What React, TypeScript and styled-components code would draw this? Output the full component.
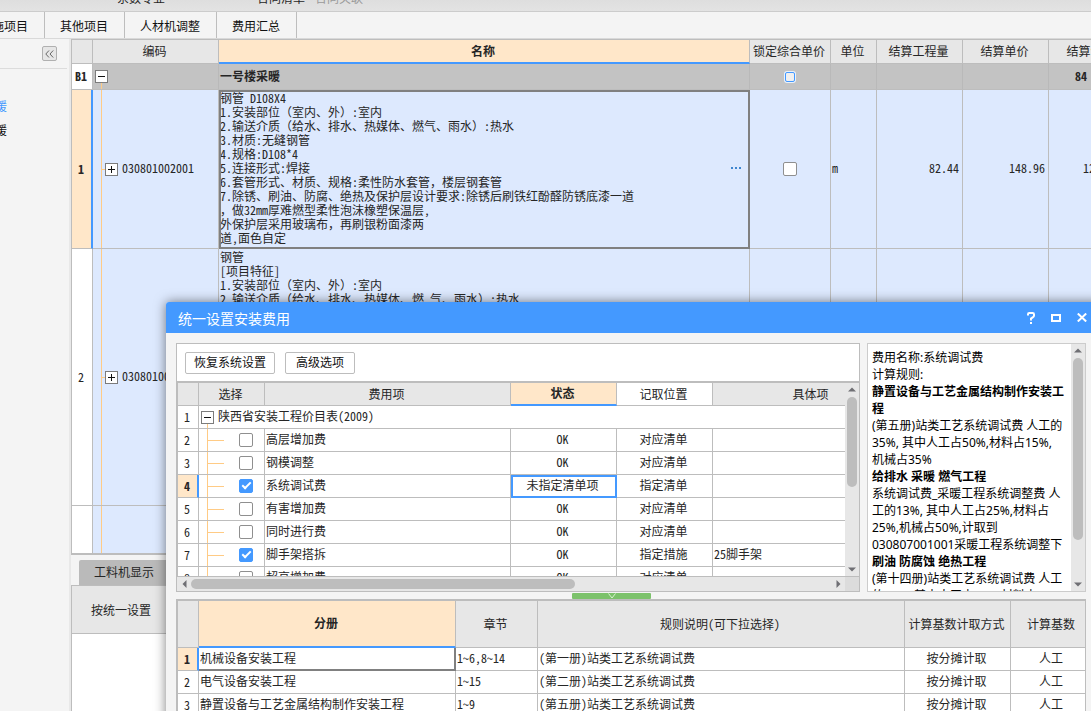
import React from "react";
import styled, { createGlobalStyle, css } from "styled-components";

const c = {
  line: "#bdbdbd",
  head: "#e7e7e7",
  page: "#f4f4f4",
  blue: "#4499ff",
  peach: "#ffe7c9",
  tree: "#ffcb85",
  pick: "#dde9fe",
  ink: "#262626",
};
const uiFont = `"Noto Sans", "Noto Sans CJK SC", sans-serif`;
const gridFont = `"Noto Sans Mono CJK SC", "Noto Sans CJK SC", monospace`;

const Global = createGlobalStyle`
  *, *::before, *::after { box-sizing: border-box; }
  html, body, #root { height: 100%; }
  body { margin: 0; overflow: hidden; background: ${c.page}; color: ${c.ink}; font: 12px/16px ${uiFont}; }
  button { font: inherit; color: inherit; padding: 0; margin: 0; border: 0; background: none; }
  a { color: inherit; text-decoration: none; }
`;

const Page = styled.div`
  position: relative;
  display: flex;
  flex-direction: column;
  height: 100%;
  overflow: hidden;
`;

const Ribbon = styled.div`
  flex: none;
  display: flex;
  align-items: flex-end;
  height: 12px;
  padding: 0 0 4px 117px;
  background: linear-gradient(#dedede, #e3e3e3);
  border-bottom: 1px solid #cccccc;
`;
const RibbonItem = styled.button<{ $gap?: number; $off?: boolean }>`
  margin-right: ${(p) => p.$gap ?? 0}px;
  white-space: nowrap;
  color: ${(p) => (p.$off ? "#9a9a9a" : c.ink)};
`;

const Tabs = styled.nav`
  flex: none;
  display: flex;
  height: 27px;
  margin-left: -35px;
  border-bottom: 1px solid #d9d9d9;
`;
const Tab = styled.a`
  padding: 0 16px 0 15px;
  line-height: 30px;
  height: 26px;
  white-space: nowrap;
  color: #111;
  border-right: 1px solid ${c.line};
`;

const Body = styled.div`
  flex: 1;
  display: flex;
  min-height: 0;
`;
const Side = styled.aside`
  flex: 0 0 71px;
  overflow: hidden;
  border-right: 2px solid #e8e8e8;
`;
const SideHead = styled.div`
  display: flex;
  justify-content: flex-end;
  height: 30px;
  margin-right: 2px;
  padding: 7px 10px 0 0;
  border-bottom: 1px solid #dcdcdc;
`;
const Collapse = styled.button`
  display: grid;
  place-items: center;
  width: 15px;
  height: 15px;
  border: 1px solid #b0b0b0;
  border-radius: 2px;
  background: #e6e6e6;
`;
const SideList = styled.div`
  display: flex;
  flex-direction: column;
  gap: 8px;
  margin: 30px 0 0 -53px;
`;
const SideLink = styled.a<{ $on?: boolean }>`
  white-space: nowrap;
  color: ${(p) => (p.$on ? c.blue : "#111")};
`;

const Main = styled.main`
  flex: 1;
  min-width: 0;
  display: flex;
  flex-direction: column;
`;
const SheetBox = styled.div`
  flex: 0 0 514px;
  overflow: hidden;
  border: solid ${c.line};
  border-width: 1px 0 0 1px;
`;
const Table = styled.table<{ $extra?: number }>`
  width: calc(100% + ${(p) => p.$extra ?? 0}px);
  table-layout: fixed;
  border-collapse: separate;
  border-spacing: 0;
  font: 12px/14px ${gridFont};
`;
const Col = styled.col<{ $w?: number }>`
  width: ${(p) => (p.$w ? p.$w + "px" : "auto")};
`;
const Th = styled.th<{ $active?: boolean; $white?: boolean; $h?: number }>`
  height: ${(p) => p.$h ?? 24}px;
  padding: 0 2px 1px 0;
  overflow: hidden;
  white-space: nowrap;
  font-weight: ${(p) => (p.$active ? 700 : 400)};
  background: ${(p) => (p.$active ? c.peach : p.$white ? "#fff" : c.head)};
  border-right: 1px solid ${c.line};
  border-bottom: ${(p) => (p.$active ? `2px solid ${c.blue}` : `1px solid ${c.line}`)};
`;
const Td = styled.td<{ $align?: string; $top?: boolean; $pad?: number }>`
  padding: ${(p) => (p.$top ? 1 : 0)}px 3px 2px ${(p) => p.$pad ?? 1}px;
  overflow: hidden;
  white-space: nowrap;
  text-align: ${(p) => p.$align ?? "left"};
  vertical-align: ${(p) => (p.$top ? "top" : "middle")};
  border-right: 1px solid ${c.line};
  border-bottom: 1px solid ${c.line};
`;
const treeLine = css<{ $from?: number }>`
  background: linear-gradient(${c.tree}, ${c.tree}) 8px ${(p) => p.$from ?? 0}px / 1px 100% no-repeat;
`;
const TreeTd = styled(Td)<{ $from?: number }>`
  padding: 0;
  ${treeLine}
`;
const NumTd = styled.td<{ $on?: boolean; $bold?: boolean }>`
  padding: 0 ${(p) => (p.$on ? 1 : 2)}px 1px 0;
  text-align: center;
  vertical-align: middle;
  background: ${(p) => (p.$on ? c.peach : "#fff")};
  font-weight: ${(p) => (p.$on || p.$bold ? 700 : 400)};
  border-right: ${(p) => (p.$on ? `2px solid ${c.blue}` : `1px solid ${c.line}`)};
  border-bottom: 1px solid ${c.line};
`;
const EditTd = styled(Td)`
  outline: 2px solid #808080;
  outline-offset: -2px;
`;
const FocusTd = styled(Td)`
  outline: 2px solid ${c.blue};
  outline-offset: -2px;
`;
const BookTd = styled(Td)<{ $on?: boolean }>`
  padding-bottom: ${(p) => (p.$on ? 1 : 2)}px;
  border-right: ${(p) => (p.$on ? "2px solid #808080" : `1px solid ${c.line}`)};
  border-bottom: ${(p) => (p.$on ? "2px solid #808080" : `1px solid ${c.line}`)};
`;
const CheckTd = styled(Td)`
  padding: 0 0 2px;
  text-align: center;
`;
const SheetRow = styled.tr<{ $h: number; $group?: boolean }>`
  height: ${(p) => p.$h}px;
  background-color: ${(p) => (p.$group ? "#c3c3c3" : c.pick)};
  font-weight: ${(p) => (p.$group ? 700 : 400)};
  ${(p) =>
    p.$group &&
    css`
      ${Td}, ${TreeTd} {
        border-right-color: #b9b9b9;
      }
    `}
`;
const Row = styled.tr`
  height: 23px;
`;
const Branch = styled.div<{ $in: number; $gap?: number }>`
  display: flex;
  align-items: center;
  gap: ${(p) => p.$gap ?? 0}px;
  padding-left: ${(p) => p.$in}px;
`;
const Stub = styled.span<{ $w: number }>`
  flex: none;
  width: ${(p) => p.$w}px;
  height: 1px;
  background: ${c.tree};
`;
const Code = styled.span`
  margin-left: 4px;
  padding-bottom: 2px;
`;
const ExpandBtn = styled.button`
  flex: none;
  display: block;
  width: 13px;
  height: 13px;
  background: #fff;
  border: 1px solid #7c7c7c;
  svg {
    display: block;
  }
`;
const Lines = styled.div`
  display: flex;
  align-items: center;
  justify-content: space-between;
  white-space: pre-line;
`;
const More = styled.button`
  display: flex;
  gap: 2px;
  margin-right: 5px;
`;
const Dot = styled.i`
  width: 2px;
  height: 2px;
  background: #3f86cf;
`;

const Check = styled.input.attrs({ type: "checkbox" })<{ $glow?: boolean }>`
  appearance: none;
  flex: none;
  display: inline-grid;
  place-items: center;
  width: 14px;
  height: 14px;
  margin: 0;
  vertical-align: middle;
  background: #fff;
  border: 1px solid #8f8f8f;
  border-radius: 2px;
  &:checked {
    background: ${c.blue};
    border-color: ${c.blue};
  }
  &:checked::after {
    content: "";
    width: 5px;
    height: 9px;
    margin-bottom: 3px;
    border: solid #fff;
    border-width: 0 2px 2px 0;
    transform: rotate(45deg);
  }
  ${(p) =>
    p.$glow &&
    css`
      width: 10px;
      height: 10px;
      background: #f0f0f0;
      border: 1px solid ${c.blue};
      box-shadow: 0 0 0 1px #e8f1fc;
    `}
`;

const Lower = styled.section`
  flex: 1;
  display: flex;
  flex-direction: column;
  min-height: 0;
  border-top: 2px solid ${c.line};
`;
const LowerTabs = styled.div`
  display: flex;
  padding: 5px 0 0 8px;
  border-bottom: 1px solid ${c.line};
`;
const LowerTab = styled.button`
  height: 25px;
  padding: 0 15px;
  background: #bababa;
  border-radius: 2px 2px 0 0;
`;
const LowerHead = styled.div`
  height: 48px;
  padding-left: 19px;
  background: ${c.head};
  border: solid ${c.line};
  border-width: 0 0 1px 1px;
  font: 12px/48px ${gridFont};
`;
const LowerBlank = styled.div`
  flex: 1;
  background: #fff;
  border-left: 1px solid ${c.line};
`;

const Dialog = styled.section`
  position: absolute;
  top: 302px;
  left: 166px;
  right: 0;
  bottom: 0;
  display: flex;
  flex-direction: column;
  overflow: hidden;
  background: ${c.page};
  border-radius: 3px 0 0 0;
`;
const Shade = styled.div`
  position: absolute;
  top: 302px;
  left: 166px;
  right: -20px;
  bottom: -20px;
  border-radius: 3px;
  box-shadow: 0 0 12px rgba(0, 0, 0, 0.5);
`;
const TitleBar = styled.header`
  flex: none;
  display: flex;
  align-items: center;
  gap: 16px;
  height: 31px;
  padding: 0 4px 0 12px;
  background: ${c.blue};
  color: #fff;
`;
const Title = styled.h2`
  flex: 1;
  margin: 0;
  font: 400 14px/20px ${uiFont};
  padding-top: 2px;
`;
const WinBtn = styled.button`
  display: block;
  svg {
    display: block;
  }
`;
const DialogBody = styled.div`
  flex: 1;
  display: flex;
  flex-direction: column;
  min-height: 0;
  padding: 10px 5px 0 10px;
`;
const Upper = styled.div`
  flex: none;
  display: flex;
  gap: 7px;
  height: 249px;
`;
const FeePanel = styled.div`
  flex: 1;
  min-width: 0;
  display: flex;
  flex-direction: column;
  background: #fff;
  border: 1px solid ${c.line};
`;
const Actions = styled.div`
  flex: none;
  display: flex;
  gap: 10px;
  height: 37px;
  padding: 8px 8px 0;
`;
const Action = styled.button`
  height: 22px;
  min-width: 70px;
  padding: 0 8px;
  color: #111;
  border: 1px solid ${c.line};
  border-radius: 2px;
  background: #fff;
`;
const FeeGrid = styled.div`
  flex: 1;
  display: flex;
  min-height: 0;
  border: solid ${c.line};
  border-width: 2px 0 1px 1px;
`;
const Clip = styled.div`
  flex: 1;
  min-width: 0;
  overflow: hidden;
`;
const VBar = styled.div<{ $thumb: number }>`
  flex: none;
  display: flex;
  flex-direction: column;
  align-items: center;
  justify-content: space-between;
  width: 14px;
  padding: 4px 0;
  background: ${c.head};
  > i {
    width: 10px;
    height: ${(p) => p.$thumb}px;
    margin: 5px 0 auto;
    border-radius: 5px;
    background: ${c.line};
  }
`;
const HBar = styled.div`
  flex: none;
  display: flex;
  align-items: center;
  height: 14px;
  background: ${c.head};
  padding-left: 5px;
  > i {
    width: 384px;
    height: 10px;
    margin: 0 auto 0 4px;
    border-radius: 5px;
    background: ${c.line};
  }
`;
const Corner = styled.span`
  width: 14px;
  height: 14px;
  margin-left: 4px;
  background: #dcdcdc;
`;
const ArrowBtn = styled.button`
  display: block;
  svg {
    display: block;
  }
`;

const NotePanel = styled.div`
  flex: 0 0 219px;
  display: flex;
  background: #fff;
  border: 1px solid #cccccc;
`;
const Note = styled.div`
  flex: 1;
  min-width: 0;
  padding: 5px 0 0 4px;
  overflow: hidden;
  color: #000;
  font: 12px/17px ${uiFont};
  white-space: nowrap;
`;
const NoteLine = styled.div<{ $b?: boolean }>`
  font-weight: ${(p) => (p.$b ? 700 : 400)};
`;

const Fold = styled.button`
  flex: none;
  display: grid;
  place-items: center;
  width: 79px;
  height: 6px;
  margin: 1px 0 0 396px;
  background: #7cc26b;
  border-radius: 1px;
`;
const BookPanel = styled.div`
  flex: 1;
  min-height: 0;
  overflow: hidden;
  background: #fff;
  border: solid ${c.line};
  border-width: 2px 1px 0 2px;
`;

function Expander({ open, label }: { open?: boolean; label: string }) {
  return (
    <ExpandBtn type="button" aria-label={label} aria-expanded={!!open}>
      <svg width="11" height="11" viewBox="0 0 11 11" stroke="#111" strokeWidth="1">
        <path d={open ? "M2 5.5h7" : "M2 5.5h7M5.5 2v7"} />
      </svg>
    </ExpandBtn>
  );
}

const arrows = {
  up: "M0 4.5 L4 0.5 L8 4.5Z",
  down: "M0 0.5 L4 4.5 L8 0.5Z",
  left: "M4.5 0 L0.5 4 L4.5 8Z",
  right: "M0.5 0 L4.5 4 L0.5 8Z",
};
function Arrow({ dir }: { dir: keyof typeof arrows }) {
  const tall = dir === "left" || dir === "right";
  return (
    <ArrowBtn type="button" aria-label={dir}>
      <svg width={tall ? 5 : 8} height={tall ? 8 : 5} fill="#6f6f74">
        <path d={arrows[dir]} />
      </svg>
    </ArrowBtn>
  );
}

const pipeText = [
  "钢管 D108X4",
  "1.安装部位（室内、外）:室内",
  "2.输送介质（给水、排水、热媒体、燃气、雨水）:热水",
  "3.材质:无缝钢管",
  "4.规格:D108*4",
  "5.连接形式:焊接",
  "6.套管形式、材质、规格:柔性防水套管，楼层钢套管",
  "7.除锈、刷油、防腐、绝热及保护层设计要求:除锈后刷铁红酚醛防锈底漆一道",
  "，做32mm厚难燃型柔性泡沫橡塑保温层,",
  "外保护层采用玻璃布，再刷银粉面漆两",
  "道,面色自定",
].join("\n");
const pipeText2 = [
  "钢管",
  "[项目特征]",
  "1.安装部位（室内、外）:室内",
  "2.输送介质（给水、排水、热媒体、燃 气、雨水）:热水",
].join("\n");

const fees = [
  { n: 2, name: "高层增加费", state: "OK", place: "对应清单", item: "" },
  { n: 3, name: "钢模调整", state: "OK", place: "对应清单", item: "" },
  { n: 4, name: "系统调试费", state: "未指定清单项", place: "指定清单", item: "", on: true },
  { n: 5, name: "有害增加费", state: "OK", place: "对应清单", item: "" },
  { n: 6, name: "同时进行费", state: "OK", place: "对应清单", item: "" },
  { n: 7, name: "脚手架搭拆", state: "OK", place: "指定措施", item: "25脚手架", on: true },
  { n: 8, name: "超高增加费", state: "OK", place: "对应清单", item: "" },
];

const note: [string, boolean?][] = [
  ["费用名称:系统调试费"],
  ["计算规则:"],
  ["静置设备与工艺金属结构制作安装工", true],
  ["程", true],
  ["(第五册)站类工艺系统调试费 人工的"],
  ["35%, 其中人工占50%,材料占15%,"],
  ["机械占35%"],
  ["给排水 采暖 燃气工程", true],
  ["系统调试费_采暖工程系统调整费 人"],
  ["工的13%, 其中人工占25%,材料占"],
  ["25%,机械占50%,计取到"],
  ["030807001001采暖工程系统调整下"],
  ["刷油 防腐蚀 绝热工程", true],
  ["(第十四册)站类工艺系统调试费 人工"],
  ["的35%, 其中人工占50%,材料占"],
];

const books = [
  { n: 1, name: "机械设备安装工程", ch: "1~6,8~14", rule: "(第一册)站类工艺系统调试费" },
  { n: 2, name: "电气设备安装工程", ch: "1~15", rule: "(第二册)站类工艺系统调试费" },
  { n: 3, name: "静置设备与工艺金属结构制作安装工程", ch: "1~9", rule: "(第五册)站类工艺系统调试费" },
];

function Sheet() {
  return (
    <SheetBox>
      <Table $extra={44}>
        <colgroup>
          <Col $w={21} />
          <Col $w={126} />
          <Col />
          <Col $w={81} />
          <Col $w={46} />
          <Col $w={86} />
          <Col $w={86} />
          <Col $w={86} />
        </colgroup>
        <thead>
          <tr>
            <Th />
            <Th>编码</Th>
            <Th $active>名称</Th>
            <Th>锁定综合单价</Th>
            <Th>单位</Th>
            <Th>结算工程量</Th>
            <Th>结算单价</Th>
            <Th>结算合价</Th>
          </tr>
        </thead>
        <tbody>
          <SheetRow $h={26} $group>
            <NumTd $bold>B1</NumTd>
            <TreeTd $from={19}>
              <Branch $in={2}>
                <Expander open label="一号楼采暖" />
              </Branch>
            </TreeTd>
            <Td>一号楼采暖</Td>
            <CheckTd>
              <Check $glow aria-label="锁定综合单价 B1" />
            </CheckTd>
            <Td />
            <Td />
            <Td />
            <Td $pad={26}>84</Td>
          </SheetRow>
          <SheetRow $h={159}>
            <NumTd $on>1</NumTd>
            <TreeTd>
              <Branch $in={8}>
                <Stub $w={4} />
                <Expander label="030801002001" />
                <Code>030801002001</Code>
              </Branch>
            </TreeTd>
            <EditTd>
              <Lines>
                {pipeText}
                <More type="button" aria-label="更多">
                  <Dot />
                  <Dot />
                  <Dot />
                </More>
              </Lines>
            </EditTd>
            <CheckTd>
              <Check aria-label="锁定综合单价 1" />
            </CheckTd>
            <Td>m</Td>
            <Td $align="right">82.44</Td>
            <Td $align="right">148.96</Td>
            <Td $align="right">12280.26</Td>
          </SheetRow>
          <SheetRow $h={257}>
            <NumTd>2</NumTd>
            <TreeTd>
              <Branch $in={8}>
                <Stub $w={4} />
                <Expander label="030801002002" />
                <Code>030801002002</Code>
              </Branch>
            </TreeTd>
            <Td $top>
              <Lines>{pipeText2}</Lines>
            </Td>
            <Td />
            <Td />
            <Td />
            <Td />
            <Td />
          </SheetRow>
          <SheetRow $h={60}>
            <NumTd />
            <TreeTd />
            <Td />
            <Td />
            <Td />
            <Td />
            <Td />
            <Td />
          </SheetRow>
        </tbody>
      </Table>
    </SheetBox>
  );
}

function FeeTable() {
  return (
    <FeePanel>
      <Actions>
        <Action type="button">恢复系统设置</Action>
        <Action type="button">高级选项</Action>
      </Actions>
      <FeeGrid>
        <Clip>
          <Table $extra={66}>
            <colgroup>
              <Col $w={21} />
              <Col $w={66} />
              <Col $w={246} />
              <Col $w={106} />
              <Col $w={96} />
              <Col />
            </colgroup>
            <thead>
              <tr>
                <Th $h={23} />
                <Th $h={23}>选择</Th>
                <Th $h={23}>费用项</Th>
                <Th $h={23} $active>
                  状态
                </Th>
                <Th $h={23} $white>
                  记取位置
                </Th>
                <Th $h={23}>具体项</Th>
              </tr>
            </thead>
            <tbody>
              <Row>
                <NumTd>1</NumTd>
                <TreeTd colSpan={5} $from={17}>
                  <Branch $in={2}>
                    <Expander open label="陕西省安装工程价目表" />
                    <Code>陕西省安装工程价目表(2009)</Code>
                  </Branch>
                </TreeTd>
              </Row>
              {fees.map((f) => {
                const State = f.n === 4 ? FocusTd : Td;
                return (
                  <Row key={f.n}>
                    <NumTd $on={f.n === 4}>{f.n}</NumTd>
                    <TreeTd>
                      <Branch $in={8} $gap={15}>
                        <Stub $w={17} />
                        <Check id={"fee" + f.n} defaultChecked={f.on} />
                      </Branch>
                    </TreeTd>
                    <Td>
                      <label htmlFor={"fee" + f.n}>{f.name}</label>
                    </Td>
                    <State $align="center">{f.state}</State>
                    <Td $align="center">{f.place}</Td>
                    <Td>{f.item}</Td>
                  </Row>
                );
              })}
            </tbody>
          </Table>
        </Clip>
        <VBar $thumb={90}>
          <Arrow dir="up" />
          <i />
          <Arrow dir="down" />
        </VBar>
      </FeeGrid>
      <HBar>
        <Arrow dir="left" />
        <i />
        <Arrow dir="right" />
        <Corner />
      </HBar>
    </FeePanel>
  );
}

export default function App() {
  return (
    <Page>
      <Global />
      <Ribbon>
        <RibbonItem $gap={92}>系数专业</RibbonItem>
        <RibbonItem $gap={10}>合同清单</RibbonItem>
        <RibbonItem $off>合同关联</RibbonItem>
      </Ribbon>
      <Tabs>
        <Tab href="#measure">措施项目</Tab>
        <Tab href="#other">其他项目</Tab>
        <Tab href="#labour">人材机调整</Tab>
        <Tab href="#total">费用汇总</Tab>
      </Tabs>
      <Body>
        <Side>
          <SideHead>
            <Collapse type="button" aria-label="收起">
              <svg width="9" height="8" fill="none" stroke="#666" strokeWidth="1">
                <path d="M4 0.5 L0.8 4 L4 7.5M8.2 0.5 L5 4 L8.2 7.5" />
              </svg>
            </Collapse>
          </SideHead>
          <SideList>
            <SideLink href="#b1" $on>
              一号楼采暖
            </SideLink>
            <SideLink href="#b2">二号楼采暖</SideLink>
          </SideList>
        </Side>
        <Main>
          <Sheet />
          <Lower>
            <LowerTabs>
              <LowerTab type="button">工料机显示</LowerTab>
            </LowerTabs>
            <LowerHead>按统一设置</LowerHead>
            <LowerBlank />
          </Lower>
        </Main>
      </Body>

      <Shade />
      <Dialog role="dialog" aria-label="统一设置安装费用">
        <TitleBar>
          <Title>统一设置安装费用</Title>
          <WinBtn type="button" aria-label="帮助">
            <svg width="8" height="12" fill="none" stroke="#fff" strokeWidth="2">
              <path d="M1 3.5V2.2Q1 1 2.2 1H5.6Q7 1 7 2.2V3.6Q7 4.6 6 5.2L4 6.6V8.6M4 10v2" />
            </svg>
          </WinBtn>
          <WinBtn type="button" aria-label="最大化">
            <svg width="10" height="8" fill="none" stroke="#fff" strokeWidth="2">
              <path d="M1 1H9V7H1Z" />
            </svg>
          </WinBtn>
          <WinBtn type="button" aria-label="关闭">
            <svg width="10" height="9" fill="none" stroke="#fff" strokeWidth="2">
              <path d="M0.8 0.5L9.2 8.5M9.2 0.5L0.8 8.5" />
            </svg>
          </WinBtn>
        </TitleBar>
        <DialogBody>
          <Upper>
            <FeeTable />
            <NotePanel>
              <Note>
                {note.map(([t, b], i) => (
                  <NoteLine key={i} $b={b}>
                    {t}
                  </NoteLine>
                ))}
              </Note>
              <VBar $thumb={182}>
                <Arrow dir="up" />
                <i />
                <Arrow dir="down" />
              </VBar>
            </NotePanel>
          </Upper>
          <Fold type="button" aria-label="折叠">
            <svg width="8" height="6" fill="none" stroke="#d9f2d0" strokeWidth="1">
              <path d="M0.5 0.5L4 5L7.5 0.5" />
            </svg>
          </Fold>
          <BookPanel>
            <Table $extra={9}>
              <colgroup>
                <Col $w={21} />
                <Col $w={257} />
                <Col $w={82} />
                <Col />
                <Col $w={106} />
                <Col $w={83} />
              </colgroup>
              <thead>
                <tr>
                  <Th $h={47} />
                  <Th $h={47} $active>
                    分册
                  </Th>
                  <Th $h={47}>章节</Th>
                  <Th $h={47}>规则说明(可下拉选择)</Th>
                  <Th $h={47}>计算基数计取方式</Th>
                  <Th $h={47}>计算基数</Th>
                </tr>
              </thead>
              <tbody>
                {books.map((b) => (
                  <Row key={b.n}>
                    <NumTd $on={b.n === 1}>{b.n}</NumTd>
                    <BookTd $on={b.n === 1}>{b.name}</BookTd>
                    <Td>{b.ch}</Td>
                    <Td>{b.rule}</Td>
                    <Td $align="center">按分摊计取</Td>
                    <Td $align="center">人工</Td>
                  </Row>
                ))}
              </tbody>
            </Table>
          </BookPanel>
        </DialogBody>
      </Dialog>
    </Page>
  );
}
